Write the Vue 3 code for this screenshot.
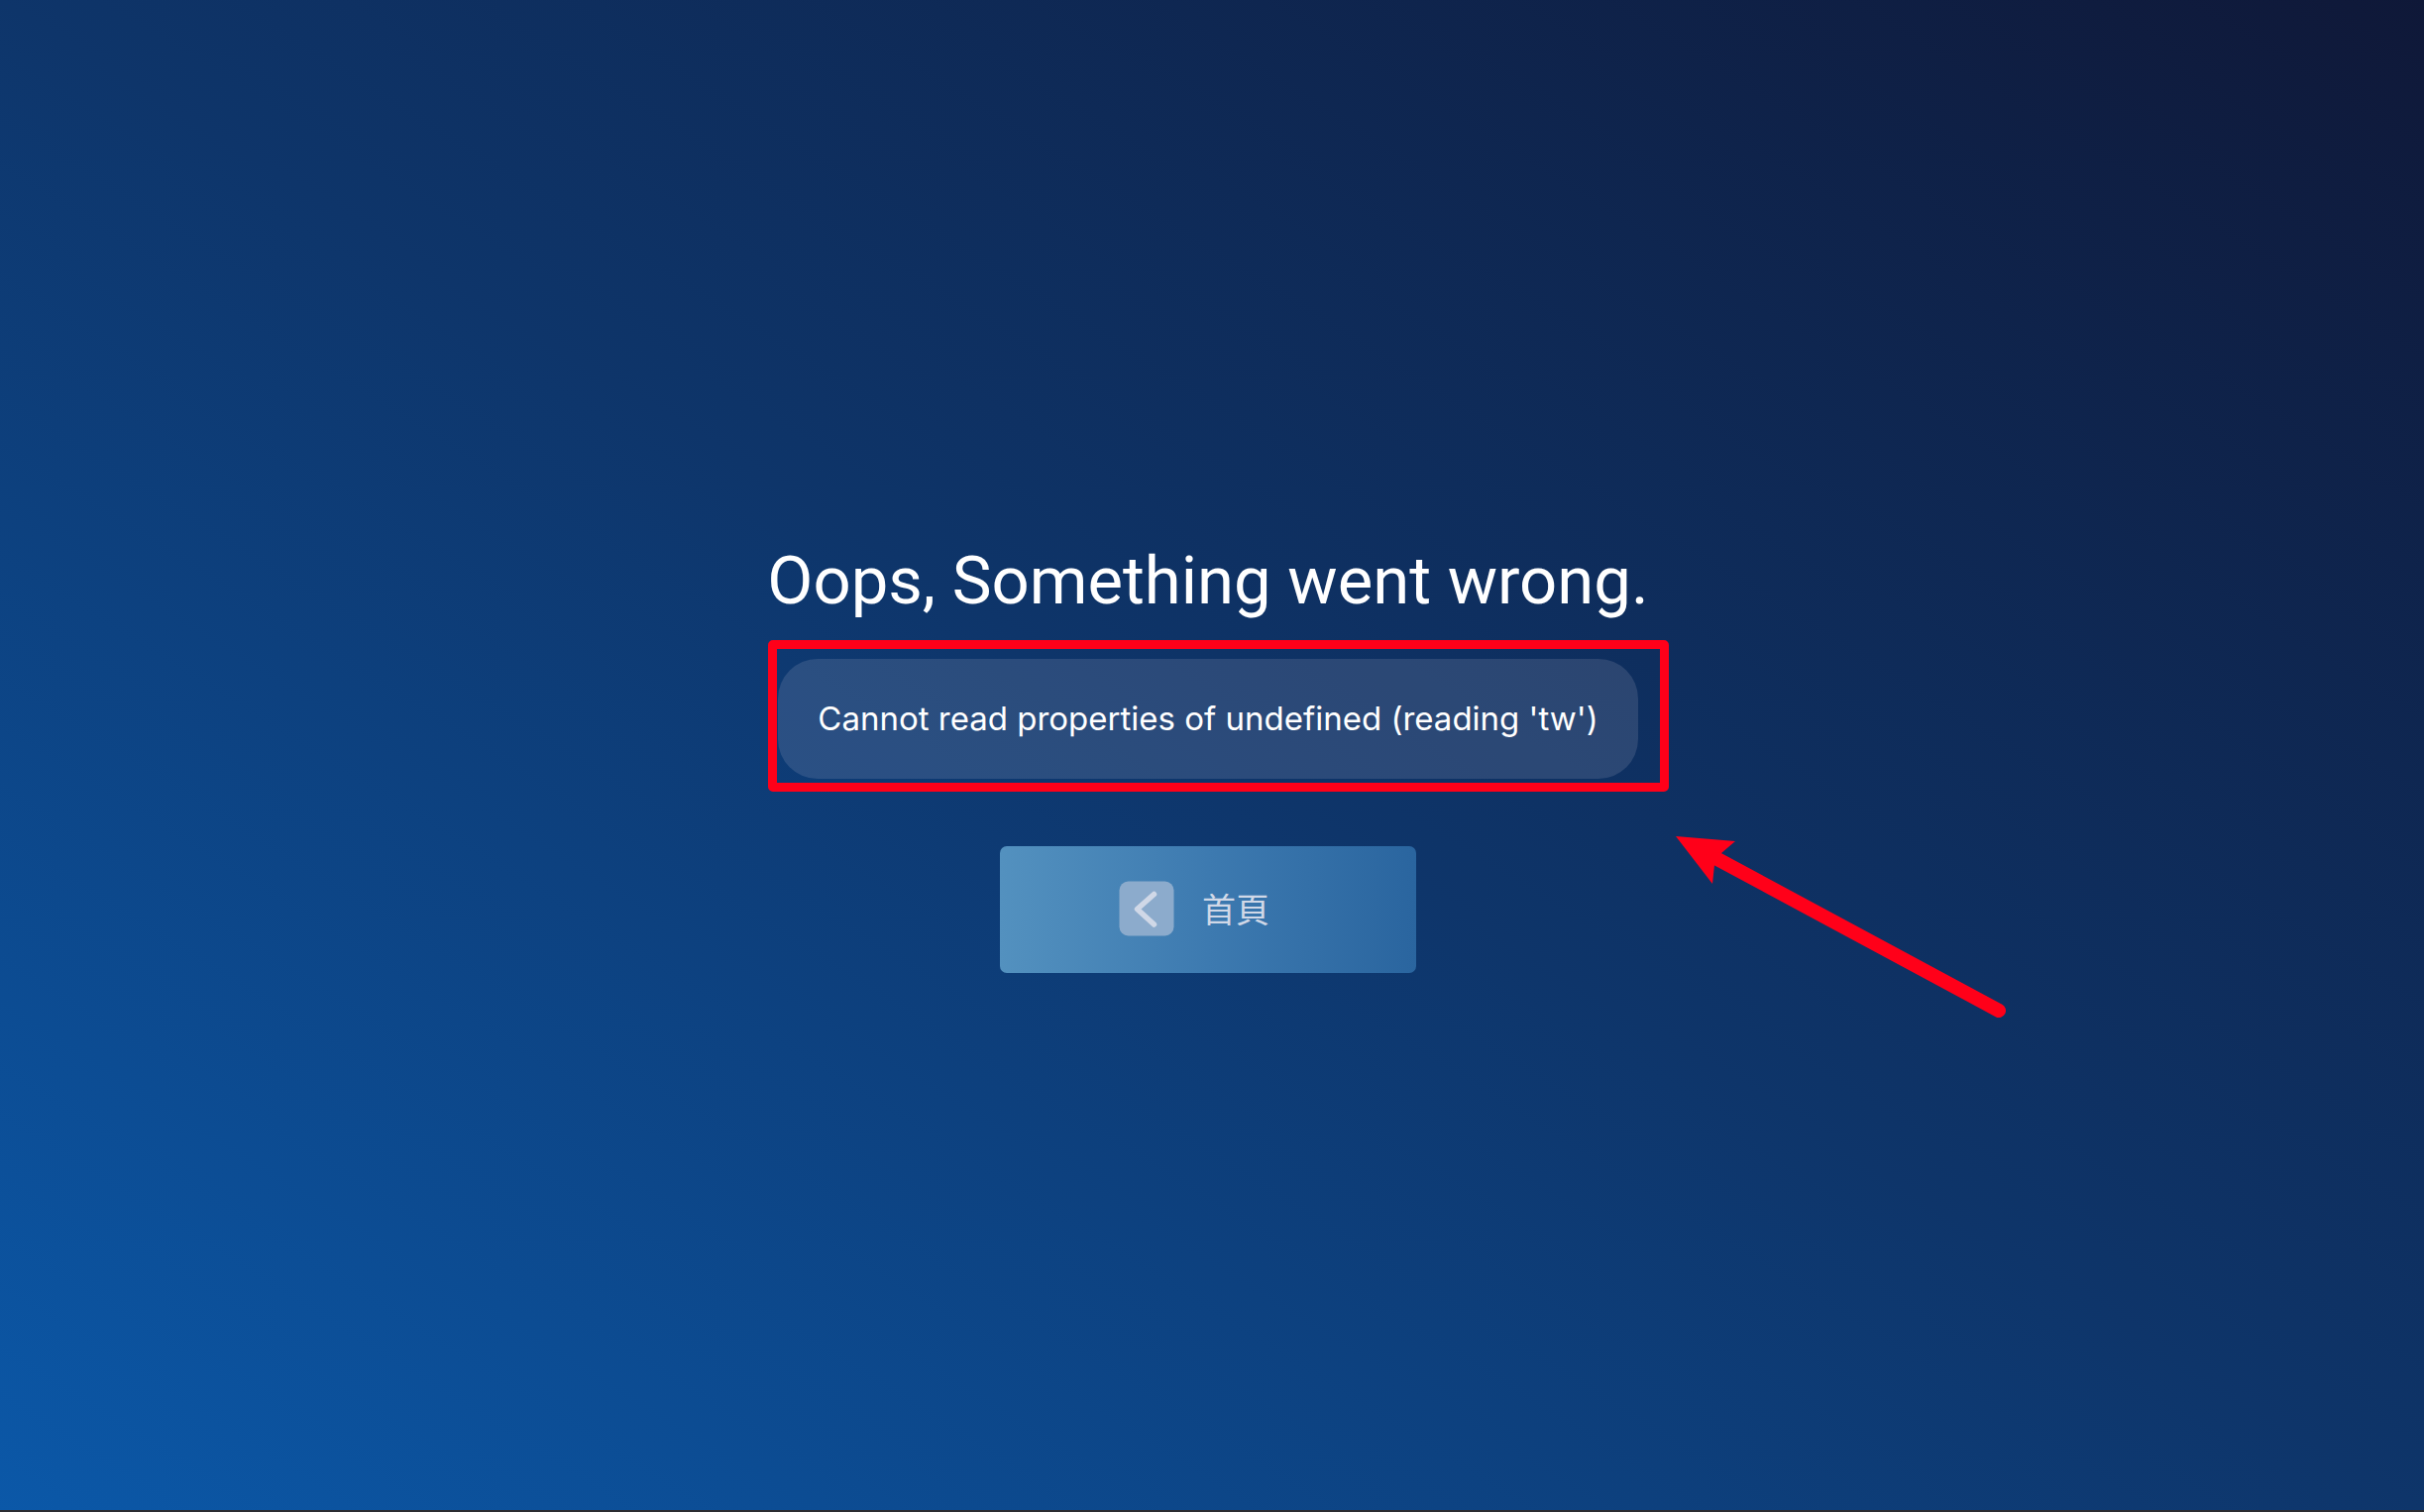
<script setup>
const message = "Cannot read properties of undefined (reading 'tw')"

function goHome() {
  window.location.hash = '/'
}
</script>

<template>
  <main class="error-page">
    <h1 class="title">Oops, Something went wrong.</h1>
    <div class="message">
      <p class="message-text">{{ message }}</p>
      <span class="highlight" aria-hidden="true"></span>
      <svg class="arrow" width="334" height="184" viewBox="0 0 334 184" aria-hidden="true">
        <path d="M0 0 60 5 46 17 39 29 37 48Z" fill="#ff0019" />
        <path d="M42 23 326 176" fill="none" stroke="#ff0019" stroke-width="14" stroke-linecap="round" />
      </svg>
    </div>
    <button class="home" type="button" @click="goHome">
      <svg class="home-icon" width="56" height="56" viewBox="0 0 112 112" aria-hidden="true">
        <rect x="1" y="1" width="110" height="110" rx="18" fill="#8cabcc" />
        <path d="M71 27 37 57 71 88" fill="none" stroke="#d0d8e7" stroke-width="11" stroke-linecap="round" stroke-linejoin="round" />
      </svg>
      <span>首頁</span>
    </button>
  </main>
</template>

<style>
body {
  margin: 0;
}
</style>

<style scoped>
.error-page {
  box-sizing: border-box;
  min-height: 100vh;
  display: flex;
  flex-direction: column;
  align-items: center;
  justify-content: center;
  padding-right: 8px;
  border-bottom: 2px solid #2b2d31;
  background: linear-gradient(to top right, #0b58a8, #0e356a 50%, #0f1838);
  color: #fff;
  font-family: Inter, "Noto Sans CJK TC", sans-serif;
  overflow: hidden;
}

.title {
  margin: 0 0 35px;
  font-family: Roboto, Inter, sans-serif;
  font-size: 67px;
  line-height: 88px;
  font-weight: 400;
}

.message {
  position: relative;
  margin-bottom: 68px;
  padding: 40px;
  border-radius: 40px;
  background: rgba(255, 235, 245, 0.12);
}

.message-text {
  margin: 0;
  font-size: 33px;
  line-height: 41px;
}

.highlight {
  position: absolute;
  inset: -19px -31px -13px -10px;
  border: 9px solid #ff0019;
  border-radius: 5px;
}

.arrow {
  position: absolute;
  top: 179px;
  left: calc(100% + 38px);
}

.home {
  display: flex;
  align-items: center;
  justify-content: center;
  gap: 28px;
  width: 420px;
  height: 128px;
  padding: 0 28px 2px 0;
  border: 0;
  border-radius: 7px;
  background: linear-gradient(to right, #5391bf, #3d7ab0 50%, #2a659f);
  color: #d0d8e7;
  font-family: "Noto Sans CJK TC", sans-serif;
  font-size: 34px;
  font-weight: 400;
  line-height: 48px;
  cursor: pointer;
}
</style>
